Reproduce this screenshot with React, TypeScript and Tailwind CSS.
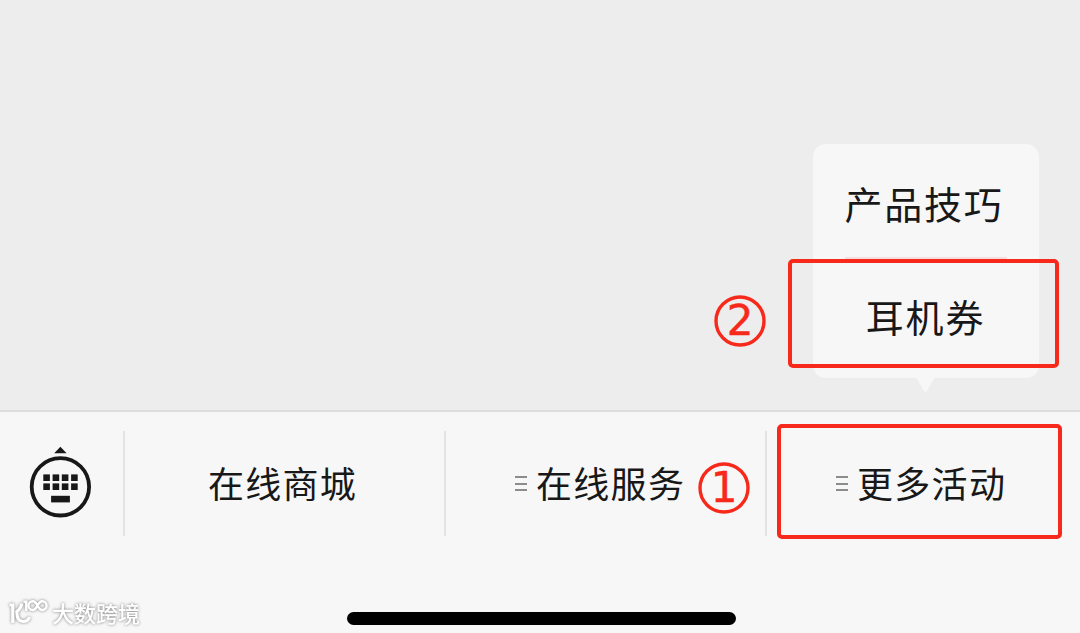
import React from "react";

const MenuLines: React.FC = () => (
  <span className="flex w-3 flex-col gap-[4.5px]">
    <span className="h-[2px] w-full bg-[#8c8c8c]"></span>
    <span className="h-[2px] w-full bg-[#8c8c8c]"></span>
    <span className="h-[2px] w-full bg-[#8c8c8c]"></span>
  </span>
);

const KeyboardIcon: React.FC = () => (
  <svg width="64" height="74" viewBox="0 0 64 74" fill="#181818">
    <path d="M32.4 2.8L38.6 9.3H26.2Z" />
    <circle cx="32.4" cy="42.8" r="28.7" fill="none" stroke="#181818" strokeWidth="3.8" />
    {[30.4, 39.4].map((y) =>
      [15.3, 24.6, 33.8, 43.1].map((x) => (
        <rect key={`${x}-${y}`} x={x} y={y} width="6.6" height="6.6" />
      ))
    )}
    <rect x="23.1" y="51.8" width="18.8" height="6.6" />
  </svg>
);

const Step: React.FC<{ value: number; className: string }> = ({ value, className }) => (
  <span
    className={`absolute flex size-[52px] items-center justify-center font-['DejaVu_Sans'] text-[42px] leading-none tracking-normal text-[#f7291b] ${className}`}
  >
    <svg className="absolute inset-0" width="52" height="52" viewBox="0 0 52 52" fill="none">
      <circle cx="26" cy="26" r="24" stroke="#f7291b" strokeWidth="3.4" />
    </svg>
    <span className="[-webkit-text-stroke:0.5px_#f7291b]">{value}</span>
  </span>
);

const Watermark: React.FC = () => (
  <div className="absolute left-2 top-[184px] flex items-start gap-1 text-white drop-shadow-[0_0_1.5px_rgba(0,0,0,0.5)]">
    <svg className="mt-[2px]" width="40" height="28" viewBox="0 0 40 28" fill="none" stroke="white" strokeWidth="3.2">
      <path d="M1.5 7H4.8V25M13.5 5.5C13.5 9 11.5 11.5 8.8 13.5C8.8 20 11 23.5 15 23.5C18.5 23.5 20.5 22 21.5 19" />
      <path d="M15.5 3.8H18.3V13" strokeWidth="2.4" />
      <path
        d="M29.5 7.6C28 4.8 26.8 3.2 24.8 3.2A4.4 4.4 0 0 0 24.8 12C26.8 12 28 10.4 29.5 7.6C31 4.8 32.2 3.2 34.2 3.2A4.4 4.4 0 0 1 34.2 12C32.2 12 31 10.4 29.5 7.6Z"
        strokeWidth="2.4"
      />
    </svg>
    <span className="text-[22px] font-medium leading-8">大数跨境</span>
  </div>
);

const PopupMenu: React.FC = () => (
  <div className="relative mr-[41.5px] mb-8 flex h-[234px] w-[226px] flex-col rounded-[13px] bg-[#f7f7f7] text-[38px] tracking-[1.8px] text-[#181818]">
    <div className="flex h-[113px] items-center justify-center pt-1 pr-[3px]">产品技巧</div>
    <div className="mx-8 h-[2px] bg-[#f5dfde]"></div>
    <div className="flex h-[119px] items-center justify-center pb-1.5">耳机券</div>
    <svg className="absolute left-[103.5px] top-[233px]" width="20" height="16" viewBox="0 0 20 16" fill="#f7f7f7">
      <path d="M0 0H19L11 14Q9.5 16 8 14Z" />
    </svg>
    <span className="absolute -left-[24.5px] top-[115px] h-[109px] w-[271px] rounded-[5px] border-4 border-[#f7291b]"></span>
    <Step value={2} className="-left-[98.5px] top-[151px]" />
  </div>
);

export default function App() {
  return (
    <div className="flex h-[633px] w-[1080px] flex-col overflow-hidden bg-[#ededed] font-['Noto_Sans_CJK_SC',sans-serif]">
      <div className="flex h-[410px] items-end justify-end">
        <PopupMenu />
      </div>

      <div className="relative flex h-[223px] flex-col border-t-2 border-[#dedede] bg-[#f7f7f7]">
        <div className="mt-[19px] flex h-[105px] text-[36px] tracking-[1.3px] text-[#181818]">
          <div className="flex w-[123px] items-start justify-center pt-[13px] pr-[3px]">
            <KeyboardIcon />
          </div>
          <div className="flex w-[321px] items-center justify-center border-l-2 border-[#e3e3e3] pr-1">
            <span className="-mt-[4px]">在线商城</span>
          </div>
          <div className="relative flex w-[321px] items-center gap-[9px] border-l-2 border-[#e3e3e3] pl-[69px]">
            <MenuLines />
            <span className="-mt-[4px]">在线服务</span>
            <Step value={1} className="left-[252px] top-[31px]" />
          </div>
          <div className="relative flex flex-1 items-center gap-[9px] border-l-2 border-[#e3e3e3] pl-[69px]">
            <MenuLines />
            <span className="-mt-[4px]">更多活动</span>
            <span className="absolute -top-[7px] left-[10px] h-[115px] w-[285px] rounded-[5px] border-4 border-[#f7291b]"></span>
          </div>
        </div>

        {/* Home indicator */}
        <div className="mx-auto mt-[76px] h-[13px] w-[389px] translate-x-[1px] rounded-full bg-black"></div>
        <Watermark />
      </div>
    </div>
  );
}
